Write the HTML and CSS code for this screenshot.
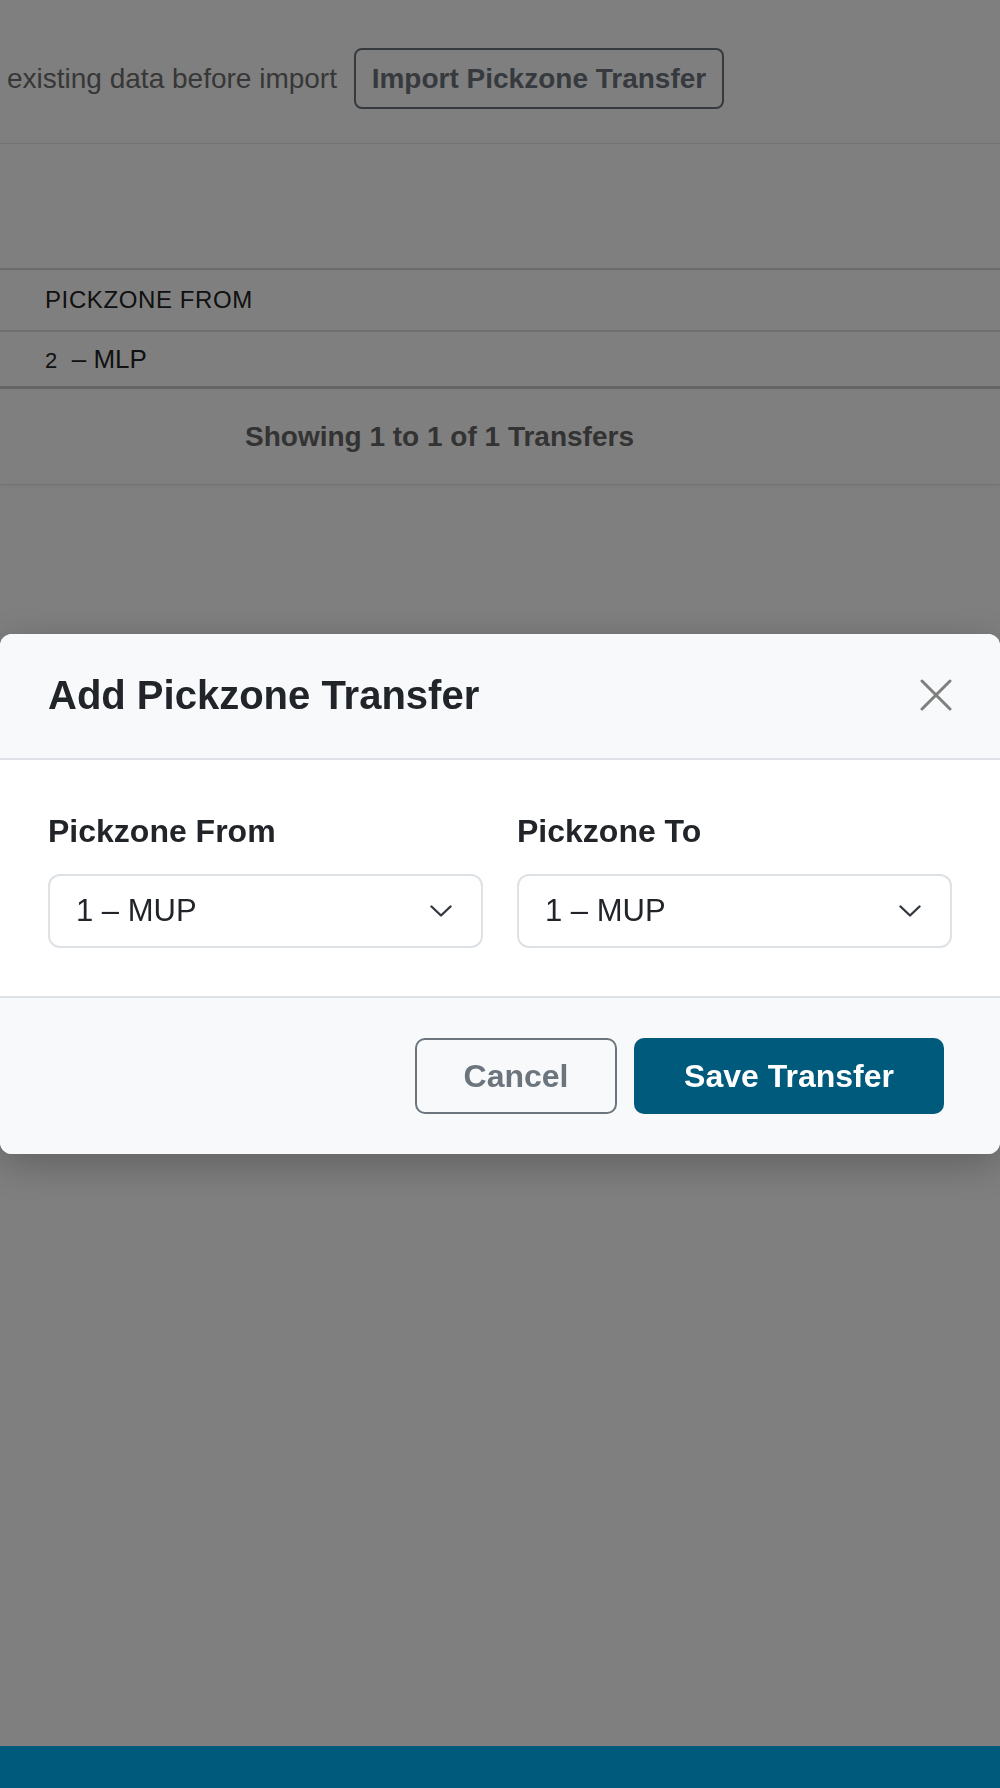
FILE: index.html
```html
<!DOCTYPE html>
<html lang="en">
<head>
    <meta charset="UTF-8">
    <meta name="viewport" content="width=device-width, initial-scale=1.0">
    <title>Pickzone Transfers</title>
    <link rel="stylesheet" href="styles.css">
</head>
<body>

<div class="page">
    <div class="toolbar">
        <span class="toolbar-note">existing data before import</span>
        <button class="btn-import">Import Pickzone Transfer</button>
    </div>

    <div class="card">
        <div class="card-top"></div>
        <table class="transfers">
            <thead>
                <tr><th>PICKZONE FROM</th></tr>
            </thead>
            <tbody>
                <tr><td><span class="zone-no">2</span> &nbsp;– MLP</td></tr>
            </tbody>
        </table>
        <div class="card-foot">Showing 1 to 1 of 1 Transfers</div>
    </div>
</div>

<div class="backdrop"></div>

<div class="modal">
    <div class="modal-header">
        <h4 class="modal-title">Add Pickzone Transfer</h4>
        <button class="btn-close" aria-label="Close">
            <svg width="32" height="32" viewBox="0 0 32 32">
                <path d="M2 2 L30 30 M30 2 L2 30" stroke="#7f7f7f" stroke-width="3" stroke-linecap="round"/>
            </svg>
        </button>
    </div>

    <div class="modal-body">
        <div class="field">
            <label>Pickzone From</label>
            <div class="select-box">
                <span>1 – MUP</span>
                <svg width="22" height="12" viewBox="0 0 22 12">
                    <polyline points="1.5,1.5 11,10.5 20.5,1.5" fill="none" stroke="#343a40" stroke-width="2.4" stroke-linecap="round" stroke-linejoin="round"/>
                </svg>
            </div>
        </div>
        <div class="field">
            <label>Pickzone To</label>
            <div class="select-box">
                <span>1 – MUP</span>
                <svg width="22" height="12" viewBox="0 0 22 12">
                    <polyline points="1.5,1.5 11,10.5 20.5,1.5" fill="none" stroke="#343a40" stroke-width="2.4" stroke-linecap="round" stroke-linejoin="round"/>
                </svg>
            </div>
        </div>
    </div>

    <div class="modal-footer">
        <button class="btn-cancel">Cancel</button>
        <button class="btn-save">Save Transfer</button>
    </div>
</div>

<div class="bottom-bar"></div>

</body>
</html>
```

FILE: styles.css
```css
body {
    font-family: "Liberation Sans", Arial, sans-serif;
    background-color: #ffffff;
    margin: 0;
    padding: 0;
    width: 1000px;
    height: 1788px;
    overflow: hidden;
    color: #333;
}

/* page behind the modal */
.toolbar {
    display: flex;
    align-items: center;
    gap: 17px;
    height: 143px;
    box-sizing: border-box;
    padding: 48px 0 34px 7px;
}
.toolbar-note {
    font-size: 28px;
    color: #6f6f6f;
}
.btn-import {
    font-family: "Liberation Sans", Arial, sans-serif;
    font-size: 28px;
    font-weight: bold;
    color: #6c757d;
    background: transparent;
    border: 2px solid #6c757d;
    border-radius: 8px;
    width: 370px;
    height: 61px;
    padding: 0;
}
.card {
    border-top: 1px solid #e6e6e6;
    border-bottom: 1px solid #e6e6e6;
    box-shadow: 0 1px 4px rgba(0, 0, 0, 0.06);
}
.card-top {
    height: 124px;
}
.transfers {
    width: 100%;
    border-collapse: collapse;
}
.transfers th {
    text-align: left;
    font-weight: normal;
    font-size: 24px;
    letter-spacing: 0.6px;
    color: #222;
    height: 60px;
    padding: 0 0 0 45px;
    border-top: 2px solid #d6d6d6;
    border-bottom: 2px solid #dcdcdc;
}
.transfers td {
    font-size: 26px;
    color: #222;
    height: 54px;
    padding: 0 0 0 45px;
    border-bottom: 3px solid #cbcbcb;
}
.zone-no {
    font-size: 22px;
}
.card-foot {
    height: 95px;
    display: flex;
    align-items: center;
    padding-left: 245px;
    font-size: 28px;
    font-weight: bold;
    color: #666;
}

/* overlay layers */
.backdrop {
    position: fixed;
    inset: 0;
    background-color: rgba(0, 0, 0, 0.5);
}
.modal {
    position: fixed;
    top: 634px;
    left: 0;
    width: 1000px;
    background-color: #ffffff;
    border-radius: 12px;
    overflow: hidden;
    box-shadow: 0 10px 40px rgba(0, 0, 0, 0.25);
}
.modal-header {
    display: flex;
    justify-content: space-between;
    align-items: center;
    background-color: #f8f9fa;
    padding: 37px 48px 39px 48px;
    border-bottom: 2px solid #dee2e6;
}
.modal-title {
    margin: 0;
    font-size: 40px;
    line-height: 48px;
    font-weight: bold;
    color: #212529;
}
.btn-close {
    background: none;
    border: none;
    padding: 0;
    width: 32px;
    height: 32px;
    display: flex;
    cursor: pointer;
}
.modal-body {
    display: grid;
    grid-template-columns: 1fr 1fr;
    gap: 34px;
    padding: 52px 48px 48px 48px;
}
.field label {
    display: block;
    font-size: 32px;
    line-height: 38px;
    font-weight: bold;
    color: #212529;
    margin-bottom: 24px;
}
.select-box {
    display: flex;
    justify-content: space-between;
    align-items: center;
    height: 74px;
    box-sizing: border-box;
    padding: 0 29px 0 26px;
    border: 2px solid #dee2e6;
    border-radius: 12px;
    font-size: 31px;
    color: #212529;
    background-color: #ffffff;
}
.modal-footer {
    display: flex;
    justify-content: flex-end;
    gap: 17px;
    background-color: #f8f9fa;
    border-top: 2px solid #dee2e6;
    padding: 40px 56px 40px 0;
}
.btn-cancel,
.btn-save {
    font-family: "Liberation Sans", Arial, sans-serif;
    font-size: 32px;
    font-weight: bold;
    border-radius: 10px;
    height: 76px;
    padding: 0;
    cursor: pointer;
}
.btn-cancel {
    width: 202px;
    color: #6c757d;
    background: transparent;
    border: 2px solid #6c757d;
}
.btn-save {
    width: 310px;
    color: #ffffff;
    background-color: #005a7b;
    border: none;
}
.bottom-bar {
    position: fixed;
    left: 0;
    right: 0;
    bottom: 0;
    height: 42px;
    background-color: #005a7b;
}
```
